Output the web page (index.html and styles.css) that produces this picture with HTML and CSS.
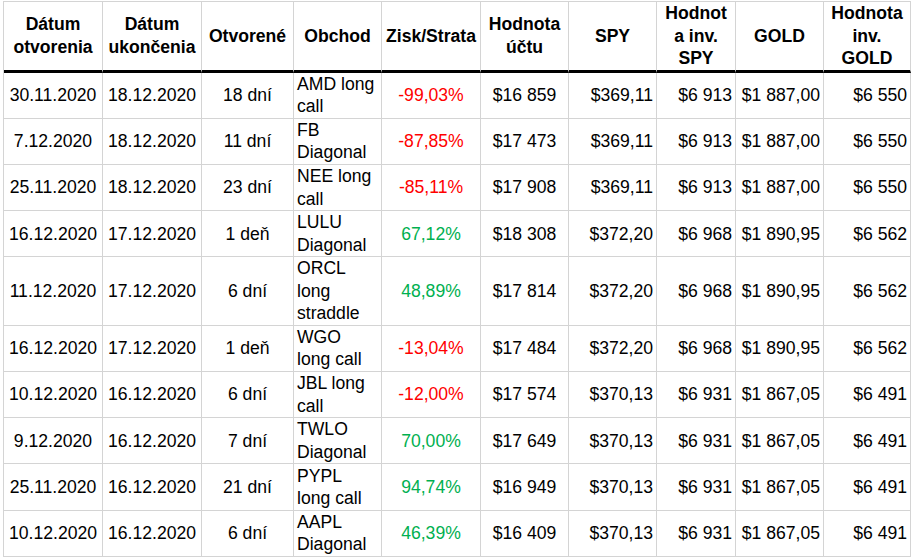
FILE: index.html
```html
<!DOCTYPE html>
<html lang="sk">
<head>
<meta charset="utf-8">
<title>Obchody</title>
<link rel="stylesheet" href="styles.css">
</head>
<body>
<div class="sheet">
<table class="trades">
<thead>
<tr>
<th class="c1">Dátum<br>otvorenia</th>
<th class="c2">Dátum<br>ukončenia</th>
<th class="c3">Otvorené</th>
<th class="c4">Obchod</th>
<th class="c5">Zisk/Strata</th>
<th class="c6">Hodnota<br>účtu</th>
<th class="c7">SPY</th>
<th class="c8">Hodnot<br>a inv.<br>SPY</th>
<th class="c9">GOLD</th>
<th class="c10">Hodnota<br>inv.<br>GOLD</th>
</tr>
</thead>
<tbody>
<tr><td class="ctr">30.11.2020</td><td class="ctr">18.12.2020</td><td class="ctr">18 dní</td><td class="trade">AMD long<br>call</td><td class="ctr loss">-99,03%</td><td class="ctr">$16 859</td><td class="num">$369,11</td><td class="num">$6 913</td><td class="num">$1 887,00</td><td class="num">$6 550</td></tr>
<tr><td class="ctr">7.12.2020</td><td class="ctr">18.12.2020</td><td class="ctr">11 dní</td><td class="trade">FB<br>Diagonal</td><td class="ctr loss">-87,85%</td><td class="ctr">$17 473</td><td class="num">$369,11</td><td class="num">$6 913</td><td class="num">$1 887,00</td><td class="num">$6 550</td></tr>
<tr><td class="ctr">25.11.2020</td><td class="ctr">18.12.2020</td><td class="ctr">23 dní</td><td class="trade">NEE long<br>call</td><td class="ctr loss">-85,11%</td><td class="ctr">$17 908</td><td class="num">$369,11</td><td class="num">$6 913</td><td class="num">$1 887,00</td><td class="num">$6 550</td></tr>
<tr><td class="ctr">16.12.2020</td><td class="ctr">17.12.2020</td><td class="ctr">1 deň</td><td class="trade">LULU<br>Diagonal</td><td class="ctr gain">67,12%</td><td class="ctr">$18 308</td><td class="num">$372,20</td><td class="num">$6 968</td><td class="num">$1 890,95</td><td class="num">$6 562</td></tr>
<tr><td class="ctr">11.12.2020</td><td class="ctr">17.12.2020</td><td class="ctr">6 dní</td><td class="trade">ORCL<br>long<br>straddle</td><td class="ctr gain">48,89%</td><td class="ctr">$17 814</td><td class="num">$372,20</td><td class="num">$6 968</td><td class="num">$1 890,95</td><td class="num">$6 562</td></tr>
<tr><td class="ctr">16.12.2020</td><td class="ctr">17.12.2020</td><td class="ctr">1 deň</td><td class="trade">WGO<br>long call</td><td class="ctr loss">-13,04%</td><td class="ctr">$17 484</td><td class="num">$372,20</td><td class="num">$6 968</td><td class="num">$1 890,95</td><td class="num">$6 562</td></tr>
<tr><td class="ctr">10.12.2020</td><td class="ctr">16.12.2020</td><td class="ctr">6 dní</td><td class="trade">JBL long<br>call</td><td class="ctr loss">-12,00%</td><td class="ctr">$17 574</td><td class="num">$370,13</td><td class="num">$6 931</td><td class="num">$1 867,05</td><td class="num">$6 491</td></tr>
<tr><td class="ctr">9.12.2020</td><td class="ctr">16.12.2020</td><td class="ctr">7 dní</td><td class="trade">TWLO<br>Diagonal</td><td class="ctr gain">70,00%</td><td class="ctr">$17 649</td><td class="num">$370,13</td><td class="num">$6 931</td><td class="num">$1 867,05</td><td class="num">$6 491</td></tr>
<tr><td class="ctr">25.11.2020</td><td class="ctr">16.12.2020</td><td class="ctr">21 dní</td><td class="trade">PYPL<br>long call</td><td class="ctr gain">94,74%</td><td class="ctr">$16 949</td><td class="num">$370,13</td><td class="num">$6 931</td><td class="num">$1 867,05</td><td class="num">$6 491</td></tr>
<tr><td class="ctr">10.12.2020</td><td class="ctr">16.12.2020</td><td class="ctr">6 dní</td><td class="trade">AAPL<br>Diagonal</td><td class="ctr gain">46,39%</td><td class="ctr">$16 409</td><td class="num">$370,13</td><td class="num">$6 931</td><td class="num">$1 867,05</td><td class="num">$6 491</td></tr>
</tbody>
</table>
</div>
</body>
</html>
```

FILE: styles.css
```css
html, body {
  margin: 0;
  padding: 0;
  background: #ffffff;
}

.sheet {
  padding: 1px 0 0 3px;
  font-family: "Liberation Sans", Arial, sans-serif;
  font-size: 17.6px;
  color: #000000;
}

.trades {
  border-collapse: separate;
  border-spacing: 0;
  table-layout: fixed;
  width: 908px;
  border-top: 1px solid #d4d4d4;
  border-left: 1px solid #d4d4d4;
}

.trades th,
.trades td {
  box-sizing: border-box;
  padding: 0 3px;
  line-height: 22.5px;
  border-right: 1px solid #d4d4d4;
  border-bottom: 1px solid #d4d4d4;
  vertical-align: middle;
  white-space: nowrap;
  overflow: visible;
}

.trades th {
  font-weight: bold;
  text-align: center;
  border-bottom: 3px solid #000000;
  height: 70.6px;
}

.trades td {
  height: 46.2px;
}

.c1 { width: 99px; }
.c2 { width: 99px; }
.c3 { width: 92px; }
.c4 { width: 88px; }
.c5 { width: 99px; }
.c6 { width: 88px; }
.c7 { width: 88px; }
.c8 { width: 79px; }
.c9 { width: 88px; }
.c10 { width: 87px; }

.ctr { text-align: center; }
.num { text-align: right; }
.trade { text-align: left; }

.loss { color: #ff0000; }
.gain { color: #00b050; }
```
